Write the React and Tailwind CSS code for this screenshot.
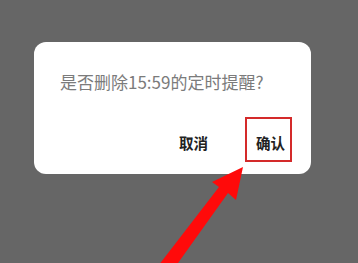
import React from 'react';

const font = { fontFamily: '"Noto Sans CJK SC", "Noto Sans", sans-serif' };

// red annotation arrow pointing at the confirm button
const Arrow = () => (
  <svg className="absolute left-0 top-0" width="358" height="263" viewBox="0 0 358 263">
    <polygon
      points="243,167 236,200 228,193 173,270 155,270 219,187 212,182"
      fill="#ff0a0a"
    />
  </svg>
);

export default function App() {
  return (
    <div className="relative w-[358px] h-[263px] overflow-hidden bg-[#666666]" style={font}>
      <div className="ml-[34px] pt-[42px]">
        <div className="w-[277px] h-[132px] rounded-[12px] bg-white flex flex-col">
          <p className="pl-[26px] pt-[27px] text-[17px] leading-[26px] text-[#7b7b7b]">
            是否删除15:59的定时提醒?
          </p>
          <div className="flex justify-end items-center mt-auto mb-[20px] pr-[26px] gap-[48px]">
            <span className="text-[14.5px] font-bold text-[#222]">取消</span>
            <span className="text-[14.5px] font-bold text-[#222]">确认</span>
          </div>
        </div>
      </div>
      <div className="absolute left-[245px] top-[117px] w-[47px] h-[45px] border-2 border-[#d42a2a]" />
      <Arrow />
    </div>
  );
}
